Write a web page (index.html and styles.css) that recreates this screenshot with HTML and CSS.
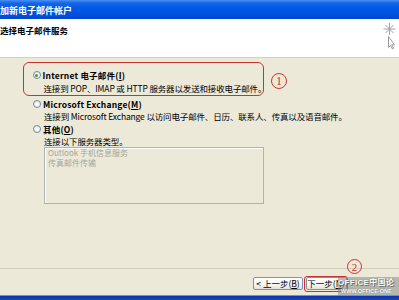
FILE: index.html
```html
<!DOCTYPE html>
<html lang="zh-CN">
<head>
<meta charset="utf-8">
<title>添加新电子邮件帐户</title>
<link rel="stylesheet" href="styles.css">
</head>
<body>
<div class="window">
  <div class="titlebar">加新电子邮件帐户</div>
  <div class="header">
    <div class="h-title">选择电子邮件服务</div>
    <svg class="wizard-icon" width="14" height="28" viewBox="0 0 14 28">
      <g stroke="#a3a3a3" stroke-width="1" fill="none">
        <path d="M6.5 1v12M0.5 7h12M2.5 3l8 8M10.5 3l-8 8"/>
      </g>
      <path d="M5.5 14.5v11l2-2l2 3.5l1.2-0.8l-2-3.4h2.8z" fill="#fff" stroke="#9a9a9a" stroke-width="1"/>
    </svg>
  </div>
  <div class="body">
    <div class="options">
      <div class="opt-row">
        <div class="opt-box">
          <div class="opt-line"><span class="radio checked"></span><span class="opt-title">Internet 电子邮件(<u>I</u>)</span></div>
          <div class="desc">连接到 POP、IMAP 或 HTTP 服务器以发送和接收电子邮件。</div>
        </div>
        <span class="num-circle num-one">1</span>
      </div>
      <div class="opt opt-second">
        <div class="opt-line"><span class="radio"></span><span class="opt-title">Microsoft Exchange(<u>M</u>)</span></div>
        <div class="desc">连接到 Microsoft Exchange 以访问电子邮件、日历、联系人、传真以及语音邮件。</div>
      </div>
      <div class="opt">
        <div class="opt-line"><span class="radio"></span><span class="opt-title">其他(<u>O</u>)</span></div>
        <div class="desc">连接以下服务器类型。</div>
        <div class="listbox">
          <div class="list-item">Outlook 手机信息服务</div>
          <div class="list-item">传真邮件传输</div>
        </div>
      </div>
    </div>
    <div class="footer">
      <span class="num-circle num-two">2</span>
      <div class="buttons">
        <button class="btn btn-back">&lt; 上一步(<u>B</u>)</button>
        <div class="highlight"><button class="btn btn-next">下一步(<u>N</u>)</button></div>
      </div>
    </div>
  </div>
  <div class="bottom-edge"></div>
  <div class="watermark">
    <div class="wm-main">OFFICE中国论</div>
    <div class="wm-sub">WWW.OFFICE-ONE</div>
  </div>
</div>
</body>
</html>
```

FILE: styles.css
```css
* { box-sizing: border-box; margin: 0; padding: 0; }
html, body { width: 399px; height: 300px; overflow: hidden; }
body {
  font-family: "Noto Sans CJK SC", "Liberation Sans", sans-serif;
  font-size: 8.5px;
  color: #000;
  background: #ece9d8;
}
.window { position: relative; display: flex; flex-direction: column; height: 300px; }

.titlebar {
  height: 19px;
  padding-top: 3px;
  line-height: 16px;
  font-size: 9px;
  font-weight: bold;
  color: #fff;
  background: linear-gradient(to bottom, #4a90f0 0, #1565ea 3px, #0058e6 9px, #0050dc 15px, #0046cc 19px);
}

.header {
  height: 39px;
  background: #fff;
  border-bottom: 1px solid #d3d0c2;
  display: flex;
  justify-content: space-between;
}
.h-title { font-weight: bold; line-height: 12px; margin-top: 5px; }
.wizard-icon { margin: 3px 2px 0 0; }

.body { flex: 1; display: flex; flex-direction: column; }
.options { padding: 4px 0 0 23px; }
.opt-row { display: flex; align-items: flex-start; }
.opt-box {
  width: 241px;
  border: 1.5px solid #c9332d;
  border-radius: 6px;
  padding: 6px 0 1px 8.5px;
}
.opt { padding-left: 10px; }
.opt-second { margin-top: 1.75px; }
.opt-line { display: flex; align-items: center; height: 12.5px; line-height: 12.5px; }
.opt-title { font-weight: bold; letter-spacing: 0.2px; }
.radio {
  width: 8px; height: 8px;
  border-radius: 50%;
  border: 1px solid #6a8bb0;
  background: radial-gradient(circle at 60% 60%, #fff 0, #e4e4dc 100%);
  margin-right: 2px;
  display: flex; align-items: center; justify-content: center;
}
.radio.checked::after {
  content: "";
  width: 3.5px; height: 3.5px;
  border-radius: 50%;
  background: #3aa52e;
}
.desc { padding-left: 11px; height: 12.5px; line-height: 12.5px; white-space: nowrap; letter-spacing: -0.15px; }

.num-circle {
  display: flex; align-items: center; justify-content: center;
  border: 1.3px solid #d0332d;
  border-radius: 50%;
  color: #d0332d;
  font-family: "Liberation Serif", serif;
}
.num-one { width: 16px; height: 16px; font-size: 12px; margin: 11px 0 0 7px; }

.listbox {
  margin: -1px 0 0 11px;
  width: 220px;
  height: 57px;
  border: 1px solid #aab3ba;
  box-shadow: inset 1px 1px 0 #fff;
  padding-top: 0.5px;
}
.list-item { padding-left: 3px; font-size: 8px; line-height: 9.5px; color: #a5a59c; white-space: nowrap; }

.footer {
  position: relative;
  margin-top: auto;
  height: 27px;
  border-top: 1px solid #d2cebd;
}
.num-two { position: absolute; left: 347px; top: -10px; width: 15px; height: 15px; font-size: 11px; }
.buttons {
  display: flex;
  justify-content: flex-end;
  align-items: center;
  padding: 6.5px 51px 0 0;
  gap: 1px;
}
.btn {
  font-family: inherit;
  font-size: 8.5px;
  height: 13px;
  line-height: 11px;
  color: #000;
  background: linear-gradient(to bottom, #ffffff 0, #f3f2ec 70%, #e2e0d6 100%);
  border: 1px solid #7f93ad;
  border-radius: 2px;
  text-align: center;
  padding: 0;
  white-space: nowrap;
}
.btn-back { width: 50px; }
.btn-next { width: 41px; }
.highlight {
  border: 1.5px solid #c9332d;
  border-radius: 3px;
  padding: 0.5px 0.5px;
  display: flex;
}

.bottom-edge {
  height: 5px;
  border-top: 1px solid #7090d8;
  background: linear-gradient(to bottom, #0c34a6 0, #1846c0 100%);
}

.watermark {
  position: absolute;
  left: 338px;
  top: 277px;
  width: 61px;
  height: 19px;
  background: rgba(140, 140, 140, 0.55);
  color: #fff;
  overflow: hidden;
  white-space: nowrap;
}
.wm-main {
  font-family: "Liberation Sans", "Noto Sans CJK SC", sans-serif;
  font-size: 8px;
  font-weight: bold;
  line-height: 11px;
  letter-spacing: 0.3px;
  text-shadow: 0 0 1px #555, 1px 1px 0 #777;
}
.wm-sub {
  font-family: "Liberation Sans", sans-serif;
  font-size: 5.5px;
  font-weight: bold;
  line-height: 7px;
  padding-left: 3px;
  text-shadow: 0 0 1px #555;
}
```
